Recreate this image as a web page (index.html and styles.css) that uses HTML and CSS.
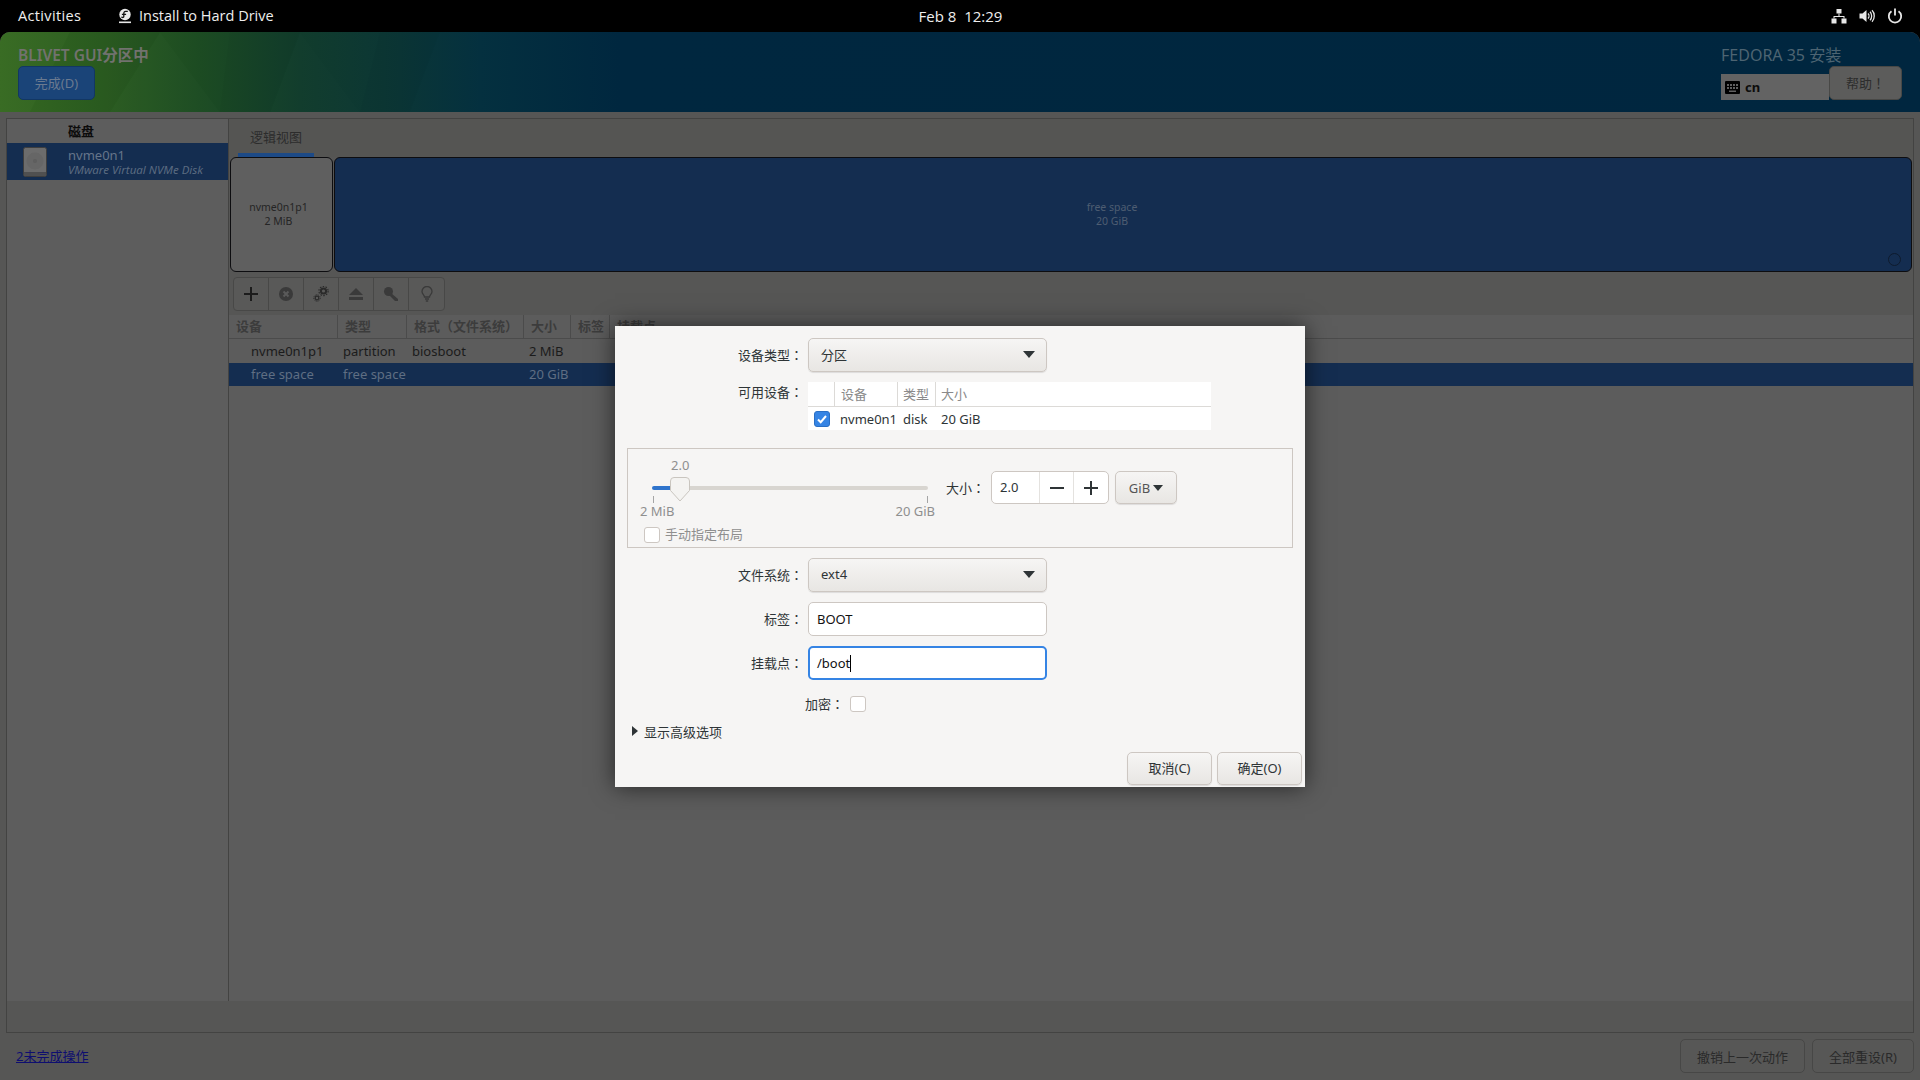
FILE: index.html
```html
<!DOCTYPE html>
<html>
<head>
  <meta charset="UTF-8">
  <title>Install to Hard Drive</title>
  <link rel="stylesheet" href="styles.css">
</head>
<body>
  <div class="topbar">
    <div class="top-left">
      <span class="activities">Activities</span>
      <span class="app-name">
        <svg class="app-icon" width="14" height="16" viewBox="0 0 14 16">
          <circle cx="7" cy="6.5" r="5.7" fill="#e8e8e8"/>
          <path d="M7.6 3.4h2.2M7.6 3.4c-1.4 0-1.8 1-1.8 2v3c0 1.200-1.800 1.500-2.300.4M3.900 6.300h4.200" fill="none" stroke="#111" stroke-width="1.300"/>
          <rect x="1" y="13.500" width="12" height="1.600" fill="#e8e8e8"/>
        </svg>
        Install to Hard Drive
      </span>
    </div>
    <div class="clock">Feb 8&nbsp; 12:29</div>
    <div class="tray">
      <svg width="16" height="16" viewBox="0 0 16 16" fill="#e8e8e8">
        <rect x="5.500" y="1" width="5" height="4.500"/>
        <rect x="0.500" y="10.500" width="5" height="5"/>
        <rect x="10.500" y="10.500" width="5" height="5"/>
        <path d="M7.500 5.500h1V8H13.500v2.500h-1V9h-9v1.500h-1V8h5z"/>
      </svg>
      <svg width="16" height="16" viewBox="0 0 16 16" fill="#e8e8e8">
        <path d="M0.500 5.500H3.500L7.500 2v12L3.500 10.500H0.500z"/>
        <path d="M9 5.500c1.300 1.300 1.300 3.700 0 5M11 3.800c2.200 2.200 2.200 6.200 0 8.400M13 2.300c3 3 3 8.400 0 11.400" fill="none" stroke="#e8e8e8" stroke-width="1.300"/>
      </svg>
      <svg width="16" height="16" viewBox="0 0 16 16" fill="none" stroke="#e8e8e8" stroke-width="1.800">
        <path d="M4.500 3.300a6.200 6.200 0 1 0 7 0"/>
        <path d="M8 0.500v7"/>
      </svg>
    </div>
  </div>

  <div class="window">
    <div class="header">
      <svg class="header-art" width="560" height="80" viewBox="0 0 560 80">
        <path d="M0 0h70L30 80H0z" fill="#fff" opacity="0.012"/>
        <path d="M70 0h90l-50 80H30z" fill="#000" opacity="0.025"/>
        <path d="M160 0l60 80H110z" fill="#fff" opacity="0.01"/>
        <path d="M230 0h70l-30 80h-50z" fill="#000" opacity="0.025"/>
        <path d="M300 0l60 80h-90z" fill="#fff" opacity="0.008"/>
        <path d="M380 0h60l-30 80h-50z" fill="#000" opacity="0.02"/>
      </svg>
      <div class="header-left">
        <div class="spoke-title">BLIVET GUI分区中</div>
        <button class="done-btn">完成(D)</button>
      </div>
      <div class="header-right">
        <div class="product">FEDORA 35 安装</div>
        <div class="header-tools">
          <div class="layout-box">
            <svg width="15" height="13" viewBox="0 0 15 13">
              <rect width="15" height="13" rx="1" fill="#000"/>
              <path d="M2 3h2v2H2zM5 3h2v2H5zM8 3h2v2H8zM11 3h2v2h-2zM2 6h2v2H2zM5 6h2v2H5zM8 6h2v2H8zM11 6h2v2h-2zM4 9.500h7v1.500H4z" fill="#5f5f5f"/>
            </svg>
            <span>cn</span>
          </div>
          <button class="help-btn">帮助！</button>
        </div>
      </div>
    </div>

    <div class="content">
      <div class="frame">
        <div class="frame-top">
          <div class="sidebar">
            <div class="sidebar-head">磁盘</div>
            <div class="disk-row">
              <svg class="disk-icon" width="24" height="30" viewBox="0 0 24 30">
                <rect x="0.500" y="0.500" width="23" height="29" rx="2" fill="#6c6c6c" stroke="#3e3e3e"/>
                <circle cx="12" cy="14" r="8.500" fill="#666"/>
                <circle cx="12" cy="14" r="2" fill="#5e5e5e"/>
                <rect x="1" y="25" width="22" height="4" fill="#505050"/>
              </svg>
              <div class="disk-text">
                <div class="disk-name">nvme0n1</div>
                <div class="disk-model">VMware Virtual NVMe Disk</div>
              </div>
            </div>
          </div>

          <div class="main">
            <div class="tabs"><span class="tab">逻辑视图</span></div>
            <div class="blocks">
              <div class="block block-part">nvme0n1p1<br>2 MiB</div>
              <div class="block block-free">free space<br>20 GiB<span class="block-dot"></span></div>
            </div>
            <div class="toolbar">
              <div class="tool">
                <svg width="16" height="16" viewBox="0 0 16 16" fill="#1c1c1c"><path d="M7 1h2v6h6v2H9v6H7V9H1V7h6z"/></svg>
              </div>
              <div class="tool">
                <svg width="16" height="16" viewBox="0 0 16 16"><circle cx="8" cy="8" r="7" fill="#3a3a3a"/><path d="M5.500 5.500l5 5M10.500 5.500l-5 5" stroke="#5a5a5a" stroke-width="2"/></svg>
              </div>
              <div class="tool">
                <svg width="16" height="16" viewBox="0 0 16 16" fill="none" stroke="#2a2a2a"><circle cx="10.500" cy="5" r="2.600" stroke-width="2"/><circle cx="10.500" cy="5" r="4.600" stroke-width="1.200" stroke-dasharray="1.500 1.400"/><circle cx="4" cy="12" r="1.800" stroke-width="1.200"/><circle cx="4" cy="12" r="3.200" stroke-width="1" stroke-dasharray="1.200 1"/></svg>
              </div>
              <div class="tool">
                <svg width="16" height="16" viewBox="0 0 16 16" fill="#3a3a3a"><path d="M8 2l7 7H1z"/><rect x="1" y="11" width="14" height="3"/></svg>
              </div>
              <div class="tool">
                <svg width="16" height="16" viewBox="0 0 16 16" fill="#3a3a3a"><circle cx="5.500" cy="5.500" r="4.500"/><path d="M8 7l7 6v2h-3l-1-1-1-1-1-1-3-3z"/></svg>
              </div>
              <div class="tool">
                <svg width="16" height="16" viewBox="0 0 16 16" fill="none" stroke="#3a3a3a" stroke-width="1.300"><path d="M5.500 11c0-2-2.500-3-2.500-5.500a5 5 0 0 1 10 0C13 8 10.500 9 10.500 11z"/><path d="M6 13h4M6.800 15h2.400"/></svg>
              </div>
            </div>
            <div class="dev-table">
              <div class="dev-head">
                <span class="col-a">设备</span>
                <span class="col-b">类型</span>
                <span class="col-c">格式（文件系统）</span>
                <span class="col-d">大小</span>
                <span class="col-e">标签</span>
                <span class="col-f">挂载点</span>
              </div>
              <div class="dev-row">
                <span class="col-a">nvme0n1p1</span>
                <span class="col-b">partition</span>
                <span class="col-c">biosboot</span>
                <span class="col-d">2 MiB</span>
              </div>
              <div class="dev-row dev-row-sel">
                <span class="col-a">free space</span>
                <span class="col-b">free space</span>
                <span class="col-c"></span>
                <span class="col-d">20 GiB</span>
              </div>
            </div>
          </div>
        </div>
        <div class="frame-bottom"></div>
      </div>

      <div class="footer">
        <a class="pending" href="#">2未完成操作</a>
        <div class="footer-btns">
          <button class="foot-btn foot-undo">撤销上一次动作</button>
          <button class="foot-btn foot-reset">全部重设(R)</button>
        </div>
      </div>
    </div>
  </div>

  <div class="dialog">
    <div class="form-row">
      <label class="form-label">设备类型：</label>
      <div class="combo"><span>分区</span><i class="arrow"></i></div>
    </div>

    <div class="form-row form-row-devices">
      <label class="form-label">可用设备：</label>
      <div class="avail">
        <div class="avail-head">
          <span class="av-check"></span>
          <span class="av-dev">设备</span>
          <span class="av-type">类型</span>
          <span class="av-size">大小</span>
        </div>
        <div class="avail-row">
          <span class="av-check">
            <span class="check check-on">
              <svg width="12" height="12" viewBox="0 0 12 12"><path d="M2 6.500l2.700 2.700L10 3" fill="none" stroke="#fff" stroke-width="2"/></svg>
            </span>
          </span>
          <span class="av-dev">nvme0n1</span>
          <span class="av-type">disk</span>
          <span class="av-size">20 GiB</span>
        </div>
      </div>
    </div>

    <div class="size-frame">
      <div class="slider">
        <div class="slider-value">2.0</div>
        <div class="slider-track">
          <span class="track-fill"></span>
          <span class="track-rest"></span>
          <svg class="thumb" width="20" height="25" viewBox="0 0 20 25"><path d="M4 .5h12a3.500 3.500 0 0 1 3.500 3.500v9.500L10 24 .5 13.500V4A3.500 3.500 0 0 1 4 .5z" fill="#f4f3f1" stroke="#c9c5bf"/></svg>
        </div>
        <div class="slider-ticks"><i></i><i></i></div>
        <div class="slider-labels"><span>2 MiB</span><span>20 GiB</span></div>
        <div class="manual">
          <span class="check"></span>
          <span>手动指定布局</span>
        </div>
      </div>
      <div class="size-ctrl">
        <span class="size-label">大小：</span>
        <div class="spin">
          <span class="spin-val">2.0</span>
          <span class="spin-btn"><svg width="14" height="14" viewBox="0 0 14 14"><rect y="6" width="14" height="2" fill="#2e3436"/></svg></span>
          <span class="spin-btn"><svg width="14" height="14" viewBox="0 0 14 14"><path d="M6 0h2v6h6v2H8v6H6V8H0V6h6z" fill="#2e3436"/></svg></span>
        </div>
        <div class="unit-btn"><span>GiB</span><i class="arrow"></i></div>
      </div>
    </div>

    <div class="form-row form-row-fs">
      <label class="form-label">文件系统：</label>
      <div class="combo"><span>ext4</span><i class="arrow"></i></div>
    </div>
    <div class="form-row">
      <label class="form-label">标签：</label>
      <div class="entry">BOOT</div>
    </div>
    <div class="form-row">
      <label class="form-label">挂载点：</label>
      <div class="entry entry-focus">/boot<span class="caret"></span></div>
    </div>
    <div class="encrypt-row">
      <label>加密：</label>
      <span class="check"></span>
    </div>
    <div class="expander"><i class="expander-arrow"></i>显示高级选项</div>
    <div class="dialog-btns">
      <button class="dlg-btn">取消(C)</button>
      <button class="dlg-btn">确定(O)</button>
    </div>
  </div>
</body>
</html>
```

FILE: styles.css
```css
* {
  box-sizing: border-box;
}
html, body {
  height: 100%;
}
body {
  margin: 0;
  background: #000;
  font-family: "Noto Sans", "Noto Sans CJK JP", sans-serif;
  font-size: 13px;
  display: flex;
  flex-direction: column;
  overflow: hidden;
}
button {
  font-family: inherit;
  font-size: 13px;
  margin: 0;
  padding: 0;
}

/* gnome top bar */
.topbar {
  height: 32px;
  flex: none;
  background: #000;
  color: #eee;
  font-family: "Open Sans", sans-serif;
  font-size: 14.5px;
  font-weight: 500;
  display: grid;
  grid-template-columns: 1fr auto 1fr;
  align-items: center;
  padding: 0 17px 1px 18px;
}
.top-left {
  display: flex;
  align-items: center;
}
.activities {
  width: 100px;
  letter-spacing: 0.35px;
}
.app-name {
  display: flex;
  align-items: center;
  gap: 7px;
}
.app-icon {
  margin-top: 1px;
}
.clock {
  font-size: 15px;
}
.tray {
  display: flex;
  justify-content: flex-end;
  gap: 12px;
}

/* anaconda window */
.window {
  flex: 1;
  display: flex;
  flex-direction: column;
  min-height: 0;
  background: #565655;
  border-radius: 10px 10px 0 0;
  overflow: hidden;
}
.header {
  position: relative;
  height: 80px;
  flex: none;
  display: flex;
  justify-content: space-between;
  padding: 15px 18px 0;
  background: linear-gradient(90deg, #376b22 0, #2b5d20 100px, #1c4b22 200px, #113c2c 300px, #0b3636 400px, #04303f 480px, #00273f 620px, #00263f 100%);
}
.header-art {
  position: absolute;
  left: 0;
  top: 0;
}
.header-left, .header-right {
  position: relative;
}
.spoke-title {
  font-size: 15.5px;
  font-weight: 600;
  line-height: 16px;
  color: #72726f;
}
.done-btn {
  display: block;
  width: 77px;
  height: 34px;
  margin-top: 3px;
  padding-bottom: 2px;
  background: #1a4478;
  border: 1px solid #123763;
  border-radius: 5px;
  color: #6a7a90;
}
.header-right {
  width: 181px;
}
.product {
  font-size: 16px;
  line-height: 16px;
  color: #4d6472;
}
.header-tools {
  display: flex;
  margin-top: 3px;
  align-items: flex-end;
}
.layout-box {
  width: 108px;
  height: 26px;
  background: #636363;
  display: flex;
  align-items: center;
  gap: 5px;
  padding-left: 4px;
  font-weight: 700;
  color: #0c0c0c;
}
.help-btn {
  width: 73px;
  height: 34px;
  padding-bottom: 2px;
  background: #5c5c5b;
  border: 1px solid #484846;
  border-radius: 5px;
  color: #2c2c2c;
}

.content {
  flex: 1;
  display: flex;
  flex-direction: column;
  min-height: 0;
  padding: 6px 6px 0;
}
.frame {
  flex: 1;
  display: flex;
  flex-direction: column;
  min-height: 0;
  border: 1px solid #434342;
}
.frame-top {
  flex: 1;
  display: flex;
  min-height: 0;
}
.frame-bottom {
  height: 31px;
  flex: none;
  background: #565655;
}

/* disks */
.sidebar {
  width: 222px;
  flex: none;
  background: #5d5d5d;
  border-right: 1px solid #434342;
}
.sidebar-head {
  height: 24px;
  padding-left: 61px;
  font-weight: 700;
  line-height: 24px;
  color: #0c0c0c;
}
.disk-row {
  height: 37px;
  background: #142d50;
  display: flex;
  align-items: center;
  padding-left: 16px;
  gap: 21px;
}
.disk-icon {
  flex: none;
}
.disk-text {
  padding-top: 1px;
}
.disk-name {
  font-size: 13px;
  line-height: 15px;
  color: #66758a;
}
.disk-model {
  font-size: 11.5px;
  line-height: 14px;
  font-style: italic;
  color: #5b6b80;
}

.main {
  flex: 1;
  min-width: 0;
  background: #565655;
  display: flex;
  flex-direction: column;
}
.tabs {
  height: 38px;
  flex: none;
  background: #555553;
  padding-left: 9px;
}
.tab {
  display: block;
  width: 76px;
  height: 38px;
  line-height: 36px;
  text-align: center;
  color: #2c2c2c;
  border-bottom: 4px solid #1d4a86;
}
.blocks {
  display: flex;
  gap: 1px;
  height: 115px;
  flex: none;
  padding: 0 0 0 1px;
}
.block {
  display: flex;
  align-items: center;
  justify-content: center;
  text-align: center;
  font-size: 10.5px;
  line-height: 14px;
  border-radius: 6px;
  border: 1px solid #0d0d10;
  padding-bottom: 2px;
}
.block-part {
  width: 103px;
  background: #5f5f5f;
  color: #252525;
  padding-right: 6px;
}
.block-free {
  flex: 1;
  position: relative;
  background: #142d50;
  color: #4e5d72;
  margin-right: 1px;
  padding-right: 22px;
}
.block-dot {
  position: absolute;
  right: 10px;
  bottom: 5px;
  width: 13px;
  height: 13px;
  border: 1px solid #0e1b2e;
  border-radius: 50%;
}
.toolbar {
  display: flex;
  align-self: flex-start;
  height: 34px;
  margin: 5px 0 0 4px;
  border: 1px solid #484847;
  border-radius: 4px;
  background: #595958;
  overflow: hidden;
}
.tool {
  width: 35px;
  display: flex;
  align-items: center;
  justify-content: center;
  border-right: 1px solid #484847;
}
.tool:last-child {
  border-right: none;
}
.dev-table {
  flex: 1;
  margin-top: 4px;
  background: #5c5c5c;
}
.dev-head {
  height: 24px;
  display: flex;
  line-height: 23px;
  font-weight: 700;
  color: #3c3c3c;
  border-bottom: 1px solid #4b4b4b;
}
.dev-head span {
  padding-left: 7px;
  border-right: 1px solid #4b4b4b;
  overflow: hidden;
  white-space: nowrap;
}
.dev-head .col-f {
  border-right: none;
  flex: 1;
}
.dev-row {
  height: 24px;
  display: flex;
  line-height: 25px;
  color: #1b1b1b;
}
.dev-row-sel {
  height: 23px;
  line-height: 23px;
  background: #142d50;
  color: #5f6e83;
}
.dev-row .col-a {
  padding-left: 22px;
}
.dev-row .col-b, .dev-row .col-c, .dev-row .col-d {
  padding-left: 5px;
}
.col-a { width: 109px; }
.col-b { width: 69px; }
.col-c { width: 117px; }
.col-d { width: 47px; }
.col-e { width: 39px; }

/* bottom bar */
.footer {
  height: 47px;
  flex: none;
  display: flex;
  justify-content: space-between;
  align-items: flex-start;
  padding: 6px 0 0 10px;
}
.pending {
  margin-top: 7px;
  line-height: 20px;
  color: #0e0e70;
}
.footer-btns {
  display: flex;
  gap: 7px;
}
.foot-btn {
  height: 34px;
  background: #575756;
  border: 1px solid #474746;
  border-radius: 5px;
  color: #2a2a2a;
}
.foot-undo { width: 125px; }
.foot-reset { width: 102px; }

/* partition dialog */
.dialog {
  position: absolute;
  left: 615px;
  top: 326px;
  width: 690px;
  height: 461px;
  background: #f6f5f4;
  color: #2e3436;
  padding-top: 12px;
  box-shadow: 0 0 22px rgba(0, 0, 0, 0.6);
}
.form-row {
  display: flex;
  align-items: center;
  height: 34px;
  margin-top: 10px;
}
.form-row:first-child {
  margin-top: 0;
}
.form-row-devices {
  align-items: flex-start;
  height: 48px;
}
.form-row-devices .form-label {
  line-height: 20px;
}
.form-label {
  width: 188px;
  margin-right: 5px;
  padding-bottom: 2px;
  text-align: right;
}
.combo {
  width: 239px;
  height: 34px;
  display: flex;
  justify-content: space-between;
  align-items: center;
  padding: 0 11px 2px 12px;
  background: linear-gradient(#f6f5f4, #e8e6e3);
  border: 1px solid #cdc7c2;
  border-radius: 5px;
  box-shadow: 0 1px 1px rgba(0, 0, 0, 0.1);
}
.arrow {
  width: 0;
  height: 0;
  border-left: 6px solid transparent;
  border-right: 6px solid transparent;
  border-top: 7px solid #2e3436;
}
.avail {
  width: 403px;
  background: #fff;
}
.avail-head {
  height: 25px;
  display: flex;
  line-height: 24px;
  color: #8a8a8a;
  border-bottom: 1px solid #dcdad7;
}
.avail-head span {
  border-right: 1px solid #dcdad7;
}
.avail-head .av-size {
  border-right: none;
}
.avail-row {
  height: 23px;
  display: flex;
  align-items: center;
}
.av-check {
  width: 27px;
  padding-left: 6px;
}
.av-dev {
  width: 63px;
  padding-left: 5px;
}
.avail-head .av-dev {
  padding-left: 6px;
}
.av-type {
  width: 38px;
  padding-left: 5px;
}
.av-size {
  flex: 1;
  padding-left: 5px;
}
.check {
  display: block;
  flex: none;
  width: 16px;
  height: 16px;
  background: #fff;
  border: 1px solid #cdc7c2;
  border-radius: 3px;
}
.check-on {
  display: flex;
  align-items: center;
  justify-content: center;
  background: #3584e4;
  border-color: #2a6fc4;
}
.size-frame {
  display: flex;
  height: 100px;
  margin: 18px 12px 0;
  border: 1px solid #cdc7c2;
  padding: 8px 0 0 12px;
}
.slider {
  width: 295px;
  flex: none;
  color: #8f8f8f;
}
.slider-value {
  height: 16px;
  line-height: 16px;
  padding-left: 31px;
}
.slider-track {
  position: relative;
  display: flex;
  height: 23px;
  padding: 13px 7px 0 12px;
}
.track-fill {
  width: 20px;
  height: 4px;
  background: #2f74cc;
  border-radius: 2px 0 0 2px;
}
.track-rest {
  flex: 1;
  height: 4px;
  background: #d8d5d0;
  border-radius: 0 2px 2px 0;
}
.thumb {
  position: absolute;
  left: 30px;
  top: 4px;
}
.slider-ticks {
  display: flex;
  justify-content: space-between;
  height: 8px;
  padding: 0 7px 0 13px;
}
.slider-ticks i {
  width: 1px;
  height: 7px;
  background: #a5a5a5;
}
.slider-labels {
  display: flex;
  justify-content: space-between;
  line-height: 14px;
}
.manual {
  display: flex;
  align-items: center;
  gap: 5px;
  margin-top: 9px;
  padding-left: 4px;
  line-height: 14px;
}
.manual span:last-child {
  padding-bottom: 2px;
}
.size-ctrl {
  display: flex;
  align-items: center;
  align-self: flex-start;
  height: 33px;
  margin: 14px 0 0 11px;
}
.size-label {
  width: 45px;
}
.spin {
  width: 118px;
  height: 33px;
  display: flex;
  background: #fff;
  border: 1px solid #cdc7c2;
  border-radius: 5px;
}
.spin-val {
  width: 47px;
  padding-left: 8px;
  line-height: 31px;
}
.spin-btn {
  width: 34px;
  display: flex;
  align-items: center;
  justify-content: center;
  border-left: 1px solid #e4e2df;
}
.unit-btn {
  width: 62px;
  height: 33px;
  margin-left: 6px;
  display: flex;
  align-items: center;
  justify-content: center;
  gap: 3px;
  background: linear-gradient(#f6f5f4, #e8e6e3);
  border: 1px solid #cdc7c2;
  border-radius: 5px;
  box-shadow: 0 1px 1px rgba(0, 0, 0, 0.1);
  color: #555;
}
.unit-btn .arrow {
  border-left-width: 5px;
  border-right-width: 5px;
  border-top-width: 6px;
}
.entry {
  width: 239px;
  height: 34px;
  line-height: 32px;
  padding-left: 8px;
  background: #fff;
  border: 1px solid #cdc7c2;
  border-radius: 5px;
  color: #111;
}
.entry-focus {
  border: 2px solid #3584e4;
  line-height: 30px;
  padding-left: 7px;
}
.caret {
  display: inline-block;
  width: 1px;
  height: 17px;
  background: #000;
  vertical-align: -4px;
}
.encrypt-row {
  display: flex;
  align-items: center;
  height: 16px;
  margin-top: 16px;
  padding-left: 190px;
}
.encrypt-row label {
  width: 45px;
  padding-bottom: 2px;
}
.expander {
  display: flex;
  align-items: center;
  height: 16px;
  margin-top: 11px;
  padding-left: 17px;
}
.expander-arrow {
  width: 0;
  height: 0;
  margin-right: 6px;
  border-top: 5.500px solid transparent;
  border-bottom: 5.500px solid transparent;
  border-left: 6px solid #2e3436;
}
.dialog-btns {
  display: flex;
  justify-content: flex-end;
  gap: 5px;
  margin-top: 13px;
  padding-right: 3px;
}
.dlg-btn {
  width: 85px;
  height: 33px;
  padding-bottom: 2px;
  background: linear-gradient(#f6f5f4, #e8e6e3);
  border: 1px solid #cdc7c2;
  border-radius: 5px;
  box-shadow: 0 1px 1px rgba(0, 0, 0, 0.1);
  color: #2e3436;
}
```
